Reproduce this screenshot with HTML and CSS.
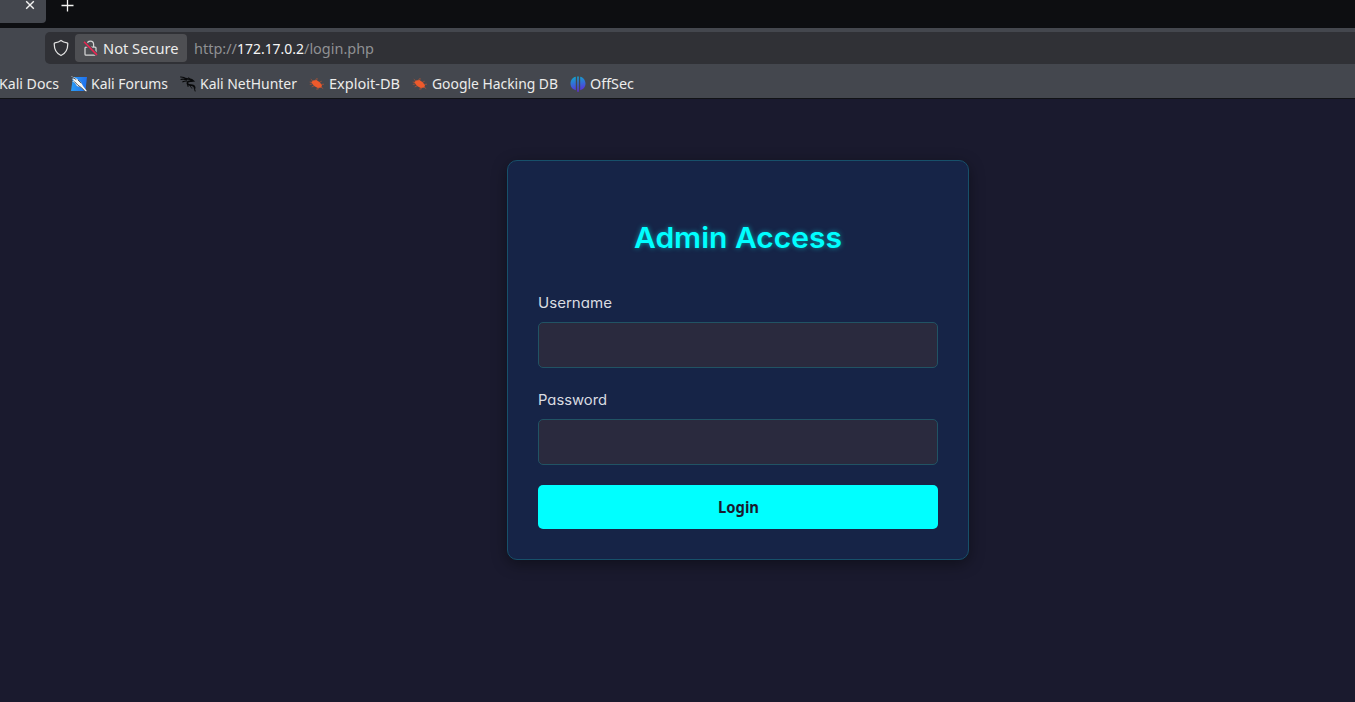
FILE: index.html
```html
<!DOCTYPE html>
<html lang="en">
<head>
<meta charset="utf-8">
<title>Admin Access</title>
<link rel="stylesheet" href="styles.css">
</head>
<body>
<header class="browser">
  <div class="tabs">
    <div class="tab"><svg width="10" height="10" viewBox="0 0 10 10"><path d="M1.2 1.2l7.6 7.6M8.8 1.2L1.2 8.8" stroke="#f3f3f2" stroke-width="1.4"/></svg></div>
    <svg class="plus" width="13" height="13" viewBox="0 0 13 13"><path d="M6.5 .5v12M.5 6.5h12" stroke="#f3f3f2" stroke-width="1.3"/></svg>
  </div>
  <div class="toolbar">
    <div class="urlbar">
      <svg class="shield" width="16" height="18" viewBox="0 0 16 18"><path d="M8 1.4C9.9 3 12 3.5 14.1 3.8 14.6 3.9 14.8 4.3 14.8 4.8 14.8 10.5 12.8 14.5 8 16.5 3.2 14.5 1.2 10.5 1.2 4.8 1.2 4.3 1.4 3.9 1.9 3.8 4 3.5 6.1 3 8 1.4z" fill="none" stroke="#e2e2e2" stroke-width="1.25" stroke-linejoin="round"/></svg>
      <div class="identity">
        <svg width="16" height="18" viewBox="0 0 16 18"><path d="M5.2 8V5.2a3.2 3.2 0 0 1 6.4 0V8M4 8h9a1 1 0 0 1 1 1v6.2a1 1 0 0 1-1 1H4a1 1 0 0 1-1-1V9a1 1 0 0 1 1-1z" fill="none" stroke="#d5d5d5" stroke-width="1.25"/><path d="M2 2.7l13 13.2" stroke="#4e4f53" stroke-width="3.4"/><path d="M2 2.7l13 13.2" stroke="#ed2452" stroke-width="1.5"/></svg>
        <svg class="label" width="76" height="22"><text x="0" y="17" textLength="75.5" lengthAdjust="spacingAndGlyphs">Not Secure</text></svg>
      </div>
      <svg class="label url" width="182" height="22"><text x="0" y="17" textLength="43" lengthAdjust="spacingAndGlyphs">http://</text><text class="host" x="43" y="17" textLength="67" lengthAdjust="spacingAndGlyphs">172.17.0.2</text><text x="110" y="17" textLength="70" lengthAdjust="spacingAndGlyphs">/login.php</text></svg>
    </div>
  </div>
  <nav class="bookmarks">
    <a class="mark docs"><svg class="label" width="59" height="22"><text x="-1" y="16" textLength="60" lengthAdjust="spacingAndGlyphs">Kali Docs</text></svg></a>
    <a class="mark"><svg class="icon" width="16" height="16" viewBox="0 0 16 16"><defs><linearGradient id="forum" x2="1"><stop stop-color="#2b9cf5"/><stop offset="1" stop-color="#2070ee"/></linearGradient></defs><path d="M2 1h14l-1.6 14H0z" fill="url(#forum)"/><path d="M0 0l5 2.3 5 4 2 3.8 4 5.1-2.2-.3-4-3.5L6 10 3.7 6.8 1 5l2.3.2L.7 2.6l2.7.9z" fill="#f7f7f4"/><path d="M1 1l4.3 2.6M3.2 5.4L7 9.3l3.2 2.2 3.6 3.5M7 4l3.3 3.2" stroke="#252c37" stroke-width=".8" fill="none"/></svg><svg class="label" width="77" height="22"><text x="0" y="16" textLength="77" lengthAdjust="spacingAndGlyphs">Kali Forums</text></svg></a>
    <a class="mark"><svg class="icon" width="16" height="16" viewBox="0 0 16 16"><path d="M.2 1C2.5.8 4.5 1.4 6.5 3M.6 3.6c2-.8 4-.6 6.4.2M2.4 6C4 5.2 5.6 4.8 7.2 5" stroke="#08090a" stroke-width="1.1" fill="none"/><path d="M5.5 2.6c2.3.6 4.2.2 6.2 1.2l1.4 1.1-1.9.3C9 5 7.2 5.7 7.4 7.3c.3 1.9 3 1.6 5 2 1.7.4 2.5 1.5 2.2 3.2" stroke="#08090a" stroke-width="1.7" fill="none"/><path d="M8 8.3c-.6 1-.3 1.9.4 2.7M10.4 9.6c-.1 1.3.6 2.2 1.9 2.5M14.3 12l.9 3.4M9.5 3l-.9-1.6" stroke="#08090a" fill="none"/></svg><svg class="label" width="97" height="22"><text x="0" y="16" textLength="97" lengthAdjust="spacingAndGlyphs">Kali NetHunter</text></svg></a>
    <a class="mark"><svg class="icon" width="16" height="16" viewBox="0 0 16 16"><g id="bug"><path d="M2.2 6.2L4 4.4l3.4-.3 3.4 2.2 2.2 3.3-.8 2-3.4.3-3.7-2z" fill="#ee5a2c"/><path d="M3.8 5L1.8 3.2M6.5 4.4l.8-1.6 1.6.2M10.3 6.4l2.4-1.2M12 8.4l3-.2M12 11.2l2.2 1.4M8.8 11.2l.5 1.8-2.1.1M5.5 9.7L2.7 11M3.6 8L.8 8.4M2.7 6.4L.7 6" fill="none" stroke="#c8552f" stroke-width=".65"/></g></svg><svg class="label" width="71" height="22"><text x="0" y="16" textLength="71" lengthAdjust="spacingAndGlyphs">Exploit-DB</text></svg></a>
    <a class="mark"><svg class="icon" width="16" height="16" viewBox="0 0 16 16"><use href="#bug"/></svg><svg class="label" width="126" height="22"><text x="0" y="16" textLength="126" lengthAdjust="spacingAndGlyphs">Google Hacking DB</text></svg></a>
    <a class="mark"><svg class="icon" width="16" height="16" viewBox="0 0 16 16"><defs><linearGradient id="sec" gradientUnits="userSpaceOnUse" x1="6" y1="0" x2="9" y2="16"><stop stop-color="#10a9cb"/><stop offset=".5" stop-color="#3768d8"/><stop offset="1" stop-color="#6128d7"/></linearGradient></defs><path d="M5.8.8v13.4C2.8 13.7.5 11 .5 7.6S2.8 1.4 5.8.8zM7.2.5h1.6V15.7H7.2zM10.2.8c3 .6 5.3 3.4 5.3 6.8s-2.3 6.1-5.3 6.6z" fill="url(#sec)"/></svg><svg class="label" width="44" height="22"><text x="0" y="16" textLength="44" lengthAdjust="spacingAndGlyphs">OffSec</text></svg></a>
  </nav>
</header>
<main class="page">
  <form class="card">
    <h1><svg width="208" height="42"><text x="0" y="31" textLength="208" lengthAdjust="spacingAndGlyphs">Admin Access</text></svg></h1>
    <label for="user"><svg width="76" height="22"><text x="0" y="15" textLength="74" lengthAdjust="spacingAndGlyphs">Username</text></svg></label>
    <input id="user" type="text">
    <label for="pass"><svg width="76" height="22"><text x="0" y="15" textLength="69" lengthAdjust="spacingAndGlyphs">Password</text></svg></label>
    <input id="pass" type="password">
    <button type="button"><svg width="41" height="24"><text x="0" y="18" textLength="41" lengthAdjust="spacingAndGlyphs">Login</text></svg></button>
  </form>
</main>
</body>
</html>
```
FILE: styles.css
```css
* { box-sizing: border-box; }
html, body { margin: 0; height: 100%; overflow: hidden; }
body { background: #1a1a2e; font-family: Inter, "Open Sans", sans-serif; display: flex; flex-direction: column; }
svg { display: block; overflow: visible; flex: none; }
.browser { height: 99px; background: #44474e; border-bottom: 1px solid #111216; font-family: "Noto Sans", "Open Sans", sans-serif; }
.tabs { height: 28px; background: #0d0e11; display: flex; align-items: flex-start; gap: 15px; }
.tab { width: 46px; height: 23px; background: #44474e; border-radius: 0 0 4px 0; padding-left: 25px; }
.plus { margin-top: -1px; }
.toolbar { height: 40px; padding: 4px 0 4px 45px; }
.urlbar { height: 32px; background: #303136; border-radius: 5px 0 0 5px; display: flex; align-items: center; padding-left: 8px; }
.identity { display: flex; align-items: center; margin-left: 6px; margin-right: 7px; width: 112px; height: 28px; border-radius: 4px; background: #4e4f53; padding-left: 7px; gap: 5px; }
.label { fill: #ececeb; font-size: 15px; }
.url { fill: #8f9093; }
.host { fill: #f5f5f5; }
.bookmarks { display: flex; align-items: center; height: 30px; gap: 12px; margin-top: 1px; }
.mark { display: flex; align-items: center; gap: 4px; }
.page { flex: 1; display: flex; justify-content: center; padding: 61px 0 0 121px; align-items: flex-start; }
.card { width: 462px; height: 400px; background: #162447; border: 1px solid #17506a; border-radius: 10px; padding: 56px 30px 30px; box-shadow: 0 4px 15px rgba(0, 0, 0, .4); }
h1 { margin: 0 0 34px; height: 42px; display: flex; justify-content: center; font-size: 28.2px; font-weight: 600; }
h1 text { fill: #0ff; text-shadow: 0 0 5px rgba(0, 255, 255, .5); font-feature-settings: "cv11"; }
label { display: block; height: 29px; font-size: 14px; }
label text { fill: #dadce1; font-feature-settings: "cv11"; }
input { display: block; width: 400px; height: 46px; margin: 0 0 22px; border: 1px solid #215364; border-radius: 5px; background: #2a2a3e; }
#pass { margin-bottom: 20px; }
button { width: 400px; height: 44px; padding: 0; border: 0; border-radius: 5px; background: #0ff; display: flex; align-items: center; justify-content: center; font: 700 16px "Noto Sans", sans-serif; }
button text { fill: #1a1a2e; }
```
